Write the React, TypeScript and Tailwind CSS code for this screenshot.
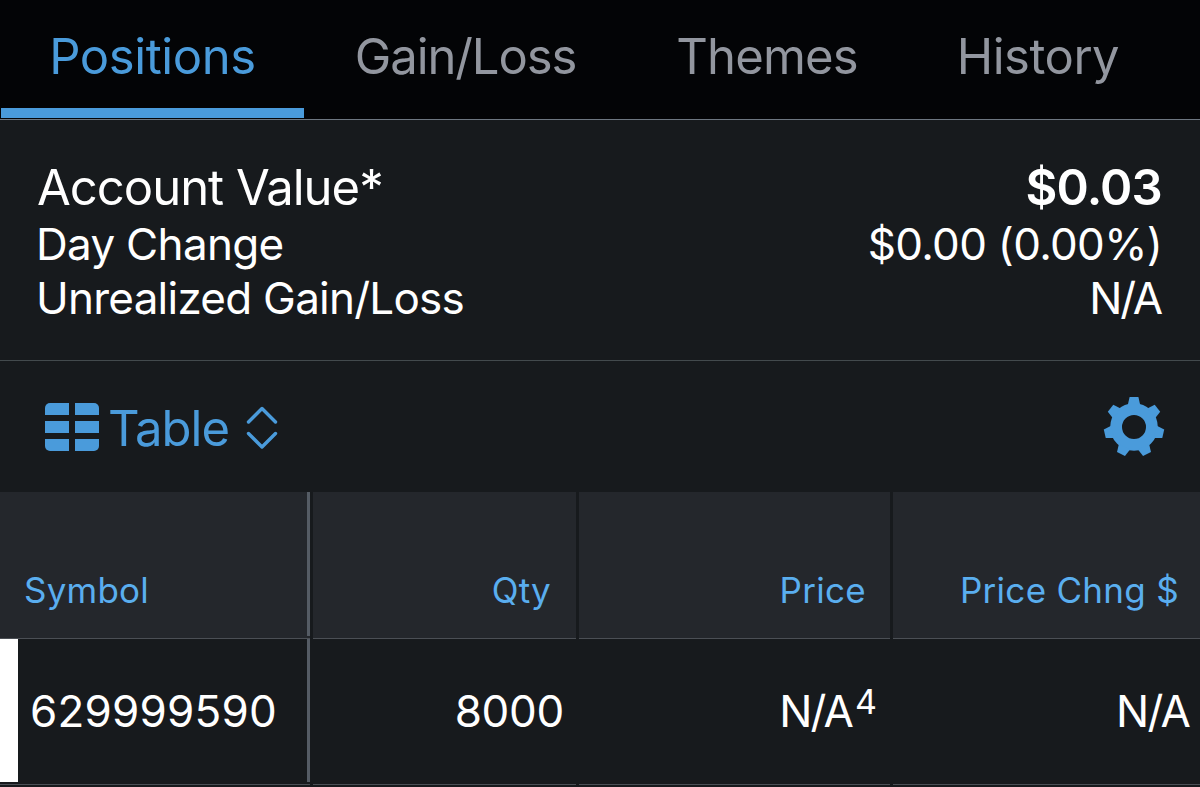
import React from 'react';

const tabs = [
  { label: 'Positions', box: 'w-[303px]', text: 'tracking-[-0.4px]' },
  { label: 'Gain/Loss', box: 'w-[323px]', text: 'tracking-[-1.1px]' },
  { label: 'Themes', box: 'w-[280px]', text: 'tracking-[-0.8px]' },
  { label: 'History', box: 'w-[262px]', text: 'tracking-[-0.5px]' },
];

function Tabs() {
  return (
    <nav className="flex h-[120px] border-b border-[#6d7680] bg-[#030406] pl-px text-[49px]">
      {tabs.map((tab, i) => (
        <button
          key={tab.label}
          className={`flex flex-none flex-col items-center pt-[2px] ${tab.box} ${i === 0 ? 'text-[#4a9bdb]' : 'text-[#92969f]'}`}
        >
          <span className={`h-[106px] leading-[110px] whitespace-nowrap ${tab.text}`}>{tab.label}</span>
          {i === 0 && <span className="h-[10px] w-full bg-[#4a9bdb]" />}
        </button>
      ))}
    </nav>
  );
}

function Summary() {
  return (
    <section className="h-[241px] border-b border-[#434a4d] pt-[38px] pr-[38px] pl-[36px] text-[44px] leading-[54px] text-white">
      <div className="flex justify-between text-[49px] leading-[60px]">
        <span className="pl-px tracking-[-1px]">Account Value*</span>
        <span className="font-semibold tracking-[-0.8px]">$0.03</span>
      </div>
      <div className="-mt-px flex justify-between">
        <span className="tracking-[-0.7px]">Day Change</span>
        <span className="tracking-[-0.7px]">$0.00 (0.00%)</span>
      </div>
      <div className="flex justify-between">
        <span className="tracking-[-0.75px]">Unrealized Gain/Loss</span>
        <span className="pr-px tracking-[-2.2px]">N/A</span>
      </div>
    </section>
  );
}

function TableIcon() {
  return (
    <div className="grid h-12 w-[54px] grid-cols-2 gap-[6px] overflow-hidden rounded-[5px]">
      {[0, 1, 2, 3, 4, 5].map((n) => (
        <span key={n} className="bg-[#4a9bdb]" />
      ))}
    </div>
  );
}

function GearIcon() {
  const teeth = [0, 1, 2, 3, 4, 5, 6];
  return (
    <svg width="62" height="62" viewBox="-31 -31 62 62" fill="#4a9bdb">
      <circle r="17.9" fill="none" stroke="#4a9bdb" strokeWidth="11.8" />
      {teeth.map((n) => (
        <path key={n} d="M-6.2 -22 L-4.4 -30 H4.4 L6.2 -22 Z" transform={`rotate(${(n * 360) / 7})`} />
      ))}
    </svg>
  );
}

function Toolbar() {
  return (
    <section className="flex h-[131px] items-center justify-between pr-[35px] pl-[45px] text-[#4a9bdb]">
      <button className="flex items-center">
        <TableIcon />
        <span className="ml-[9px] pt-[5px] text-[49px] leading-[60px] tracking-[-1px]">Table</span>
        <svg
          className="ml-[17px]"
          width="32"
          height="46"
          viewBox="0 0 32 46"
          fill="none"
          stroke="#4a9bdb"
          strokeWidth="3.4"
          strokeLinecap="round"
          strokeLinejoin="round"
        >
          <path d="M2.5 18 L16 4.5 L29.5 18" />
          <path d="M2.5 29.5 L16 43 L29.5 29.5" />
        </svg>
      </button>
      <GearIcon />
    </section>
  );
}

function Positions() {
  const columns = 'grid grid-cols-[310px_263px_311px_307px] gap-x-[3px]';
  return (
    <section>
      <div className={`${columns} h-[147px] text-right text-[35px] leading-[44px] text-[#5aaeef]`}>
        <div className="border-b border-[#4b4f55] bg-[#24272c] text-left">
          <div className="h-[144px] border-r-[3px] border-[#555c65] pt-[76px] pl-[24px]">
            <span className="tracking-[0.2px]">Symbol</span>
          </div>
        </div>
        <div className="border-b border-[#4b4f55] bg-[#24272c] pt-[76px] pr-[25px]">
          <span className="tracking-[0.2px]">Qty</span>
        </div>
        <div className="border-b border-[#4b4f55] bg-[#24272c] pt-[76px] pr-[24px]">
          <span className="tracking-[0.3px]">Price</span>
        </div>
        <div className="border-b border-[#4b4f55] bg-[#24272c] pt-[76px] pr-[21px]">
          <span className="tracking-[0.3px]">Price Chng $</span>
        </div>
      </div>
      <div className={`${columns} h-[146px] text-right text-[44px] leading-[144px] text-white`}>
        <div className="border-b border-[#4b4f55] text-left">
          <div className="flex h-[143px] border-r-[3px] border-[#555c65]">
            <span className="w-[18px] bg-white" />
            <span className="pl-[12px] tracking-[0.2px]">629999590</span>
          </div>
        </div>
        <div className="border-b border-[#4b4f55] pr-[12px]">
          <span className="tracking-[-0.3px]">8000</span>
        </div>
        <div className="flex justify-end border-b border-[#4b4f55] pr-[13px]">
          <span className="tracking-[-1.8px]">N/A</span>
          <span className="ml-[3px] text-[34px] leading-[125px]">4</span>
        </div>
        <div className="border-b border-[#4b4f55] pr-[11px]">
          <span className="tracking-[-1.8px]">N/A</span>
        </div>
      </div>
    </section>
  );
}

export default function App() {
  return (
    <main className="h-[787px] w-[1200px] overflow-hidden bg-[#171a1d] font-['Inter',sans-serif]">
      <Tabs />
      <Summary />
      <Toolbar />
      <Positions />
    </main>
  );
}
